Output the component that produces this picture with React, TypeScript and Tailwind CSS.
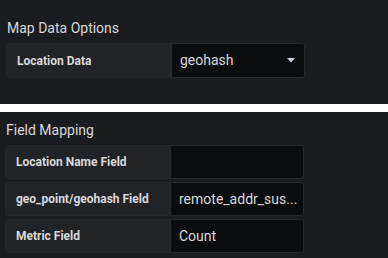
import React from "react";

const Row = ({ label, value, caret, h = "h-[34px]" }: { label: string; value: string; caret?: boolean; h?: string }) => (
  <div className={`flex ${h}`}>
    <div className="w-[165px] flex items-center pl-[10px] bg-[#222327] border border-[#26272b] rounded-l-[3px] text-[12px] font-bold text-[#d8d9da]">
      {label}
    </div>
    <div className="w-[134px] flex items-center justify-between pl-[8px] pr-[9px] bg-[#0b0c0e] border border-[#27282c] rounded-r-[3px] text-[14px] text-[#d8d9da]">
      <span className="whitespace-nowrap">{value}</span>
      {caret && (
        <svg width="8" height="5" viewBox="0 0 8 5" className="shrink-0">
          <path d="M0 0h8L4 4.5z" fill="#c7d0d9" />
        </svg>
      )}
    </div>
  </div>
);

export default function App() {
  return (
    <div className="w-[388px] h-[258px] bg-white flex flex-col" style={{ fontFamily: "Roboto, 'Liberation Sans', sans-serif" }}>
      <div className="h-[104px] bg-[#1b1c1f] pt-[19px] pl-[6px]">
        <div className="text-[14px] leading-[18px] text-[#d8d9da] pl-[1px]">Map Data Options</div>
        <div className="mt-[6px]">
          <Row label="Location Data" value="geohash" caret h="h-[35px]" />
        </div>
      </div>
      <div className="mt-[8px] flex-1 bg-[#1b1c1f] pt-[9px] pl-[5px]">
        <div className="text-[14px] leading-[18px] text-[#d8d9da] pl-[1px]">Field Mapping</div>
        <div className="mt-[6px] flex flex-col gap-[3px]">
          <Row label="Location Name Field" value="" />
          <Row label="geo_point/geohash Field" value="remote_addr_sus..." />
          <Row label="Metric Field" value="Count" />
        </div>
      </div>
    </div>
  );
}
